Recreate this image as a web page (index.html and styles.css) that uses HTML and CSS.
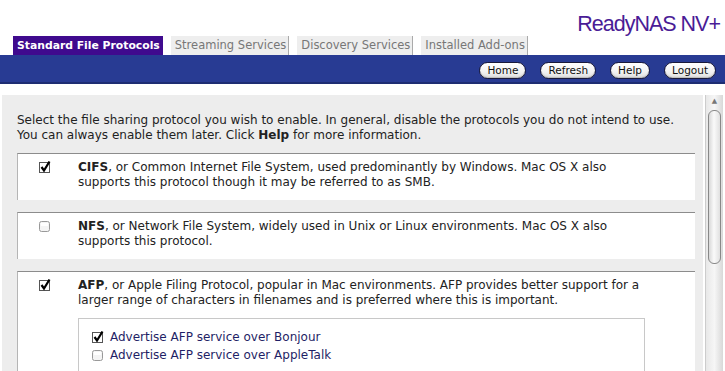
FILE: index.html
```html
<!DOCTYPE html>
<html>
<head>
<meta charset="utf-8">
<link rel="stylesheet" href="styles.css">
</head>
<body>
<div class="header">
  <div class="brand">ReadyNAS NV+</div>
  <div class="tabs">
    <div class="tab active">Standard File Protocols</div>
    <div class="tab">Streaming Services</div>
    <div class="tab">Discovery Services</div>
    <div class="tab">Installed Add-ons</div>
  </div>
</div>
<div class="navbar">
  <span class="btn">Home</span>
  <span class="btn">Refresh</span>
  <span class="btn">Help</span>
  <span class="btn">Logout</span>
</div>
<div class="main">
  <div class="panel">
    <p class="intro">Select the file sharing protocol you wish to enable. In general, disable the protocols you do not intend to use. You can always enable them later. Click <b>Help</b> for more information.</p>
    <div class="box">
      <div class="cbcol"><svg class="cb" width="14" height="14" viewBox="0 0 14 14"><rect x="1.5" y="2.5" width="10" height="10" fill="#fff" stroke="#555"/><path d="M3.5 7 L6 10.5 L11.5 1.5" fill="none" stroke="#000" stroke-width="2.2"/></svg></div>
      <div class="desc"><b>CIFS</b>, or Common Internet File System, used predominantly by Windows. Mac OS X also supports this protocol though it may be referred to as SMB.</div>
    </div>
    <div class="box">
      <div class="cbcol"><svg class="cb" width="14" height="14" viewBox="0 0 14 14"><rect x="1.5" y="2.5" width="10" height="10" rx="2" fill="#f4f4f4" stroke="#999"/><rect x="3" y="4" width="7" height="3" fill="#fff"/></svg></div>
      <div class="desc"><b>NFS</b>, or Network File System, widely used in Unix or Linux environments. Mac OS X also supports this protocol.</div>
    </div>
    <div class="box">
      <div class="cbcol"><svg class="cb" width="14" height="14" viewBox="0 0 14 14"><rect x="1.5" y="2.5" width="10" height="10" fill="#fff" stroke="#555"/><path d="M3.5 7 L6 10.5 L11.5 1.5" fill="none" stroke="#000" stroke-width="2.2"/></svg></div>
      <div class="desc"><b>AFP</b>, or Apple Filing Protocol, popular in Mac environments. AFP provides better support for a larger range of characters in filenames and is preferred where this is important.
        <div class="inner">
          <div class="opt"><svg class="cb" width="14" height="14" viewBox="0 0 14 14"><rect x="1.5" y="2.5" width="10" height="10" fill="#fff" stroke="#555"/><path d="M3.5 7 L6 10.5 L11.5 1.5" fill="none" stroke="#000" stroke-width="2.2"/></svg><span>Advertise AFP service over Bonjour</span></div>
          <div class="opt"><svg class="cb" width="14" height="14" viewBox="0 0 14 14"><rect x="1.5" y="2.5" width="10" height="10" rx="2" fill="#f4f4f4" stroke="#999"/><rect x="3" y="4" width="7" height="3" fill="#fff"/></svg><span>Advertise AFP service over AppleTalk</span></div>
        </div>
      </div>
    </div>
  </div>
  <div class="scrollbar">
    <div class="arrow">&#9650;</div>
    <div class="thumb"></div>
  </div>
</div>
</body>
</html>
```

FILE: styles.css
```css
html, body {
  margin: 0;
  padding: 0;
  background: #fff;
  font-family: "DejaVu Sans", Verdana, sans-serif;
  overflow: hidden;
}
.header {
  display: flex;
  flex-direction: column;
  height: 55px;
}
.brand {
  align-self: flex-end;
  font-family: "Liberation Sans", Arial, sans-serif;
  font-size: 21.5px;
  letter-spacing: -1px;
  color: #4a1c96;
  margin: 13px 5px 0 0;
  line-height: 23px;
}
.tabs {
  display: flex;
  padding-left: 13px;
  height: 19px;
  align-items: stretch;
}
.tab {
  font-size: 11.5px;
  color: #777;
  background: #eee;
  border-right: 1px solid #aaa;
  padding: 0 2px 0 4px;
  margin-right: 8px;
  line-height: 19px;
}
.tab.active {
  font-size: 10.8px;
  background: #3f0a8e;
  color: #fff;
  font-weight: bold;
  border-right: none;
  padding: 0 3px 0 4px;
  margin-right: 8px;
}
.navbar {
  background: #283b93;
  border-bottom: 2px solid #1e2d72;
  height: 27px;
  box-sizing: content-box;
  display: flex;
  justify-content: flex-end;
  align-items: center;
  gap: 14px;
  padding: 0 9px 0 0;
}
.btn {
  font-size: 10.5px;
  color: #111;
  background: linear-gradient(#fff, #f2f2f2 60%, #ddd);
  border: 1px solid #1a1a3a;
  border-radius: 9px;
  height: 15px;
  line-height: 15px;
  padding: 0 7px;
  margin-top: 4px;
  box-shadow: inset 0 -1px 1px #bbb;
}
.main {
  display: flex;
  margin-top: 11px;
  height: 300px;
}
.panel {
  flex: 1;
  margin-left: 2px;
  background: #ededed;
  padding: 18px 8px 0 15px;
  font-size: 12px;
  color: #222;
  line-height: 15px;
}
.intro {
  margin: 0 0 10px 0;
}
.box {
  display: flex;
  background: #fff;
  border-top: 1px solid #8c8c8c;
  border-left: 1px solid #b5b5b5;
  padding: 6px 0 10px 0;
  margin-bottom: 12px;
}
.cbcol {
  width: 60px;
  flex: none;
  padding-left: 20px;
  box-sizing: border-box;
}
.cb {
  display: block;
  flex: none;
}
.desc {
  flex: 1;
  padding-right: 50px;
}
.inner {
  margin-top: 10px;
  width: 553px;
  border: 1px solid #c8c8c8;
  padding: 9px 0 10px 12px;
  height: 60px;
}
.opt {
  display: flex;
  align-items: center;
  gap: 5px;
  color: #1f1f66;
  height: 18px;
}
.scrollbar {
  width: 18px;
  margin-left: 2px;
  margin-right: 2px;
  background: linear-gradient(to right, #e8e8e8, #f6f6f6 50%, #d8d8d8);
  border-left: 1px solid #ccc;
  display: flex;
  flex-direction: column;
  align-items: center;
}
.arrow {
  font-size: 7px;
  color: #777;
  height: 12px;
  line-height: 12px;
}
.thumb {
  width: 11px;
  height: 152px;
  border: 1px solid #888;
  border-radius: 6px;
  background: linear-gradient(to right, #d8d8d8, #fafafa 45%, #e0e0e0);
  margin-top: 3px;
}
```
